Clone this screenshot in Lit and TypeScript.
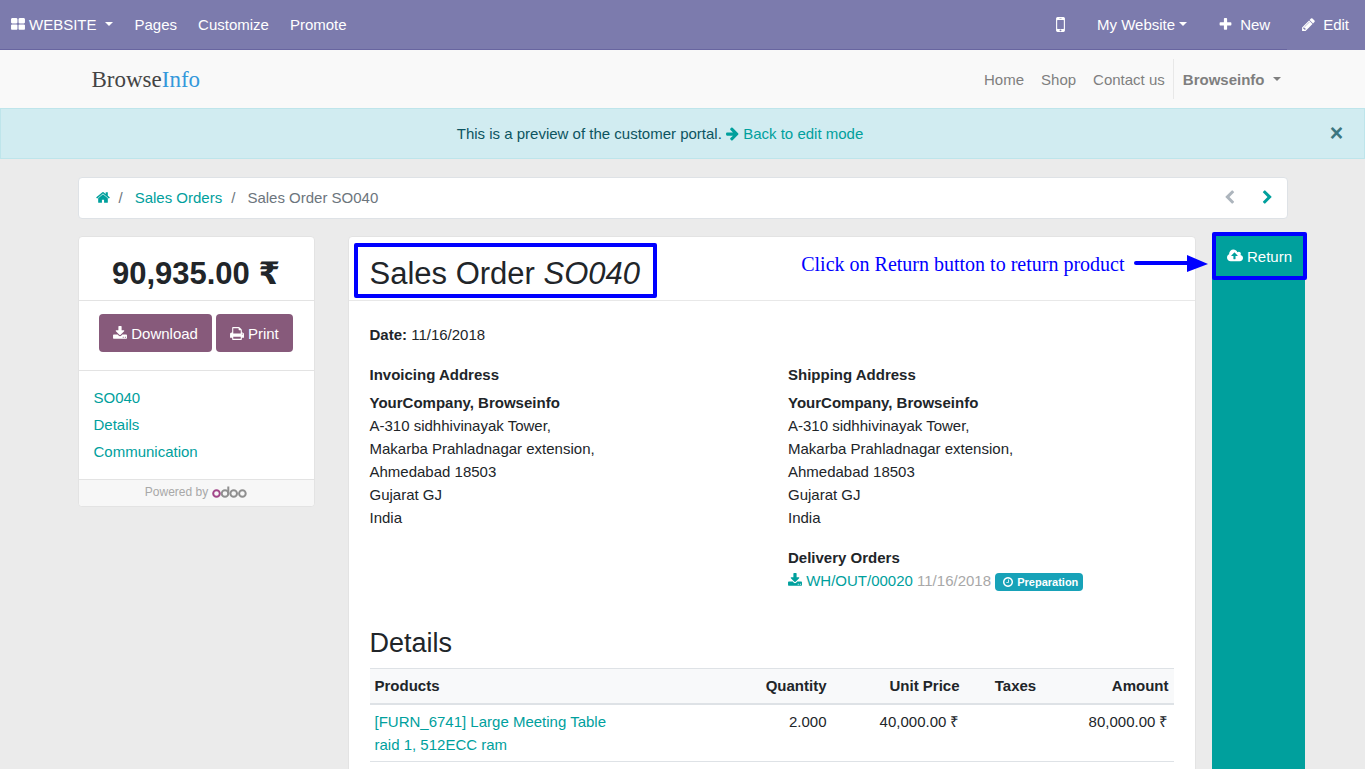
import { LitElement, html, css, svg } from "lit";
import { customElement, property } from "lit/decorators.js";

interface Glyph {
  box: string;
  d: string;
}

const GLYPHS: Record<string, Glyph> = {
  grid: {
    box: "64 0 1664 1792",
    d: "M832 1024v384q0 52-38 90t-90 38h-512q-52 0-90-38t-38-90v-384q0-52 38-90t90-38h512q52 0 90 38t38 90zm0-768v384q0 52-38 90t-90 38h-512q-52 0-90-38t-38-90v-384q0-52 38-90t90-38h512q52 0 90 38t38 90zm896 768v384q0 52-38 90t-90 38h-512q-52 0-90-38t-38-90v-384q0-52 38-90t90-38h512q52 0 90 38t38 90zm0-768v384q0 52-38 90t-90 38h-512q-52 0-90-38t-38-90v-384q0-52 38-90t90-38h512q52 0 90 38t38 90z",
  },
  home: {
    box: "64 0 1664 1792",
    d: "M1472 992v480q0 26-19 45t-45 19h-384v-384h-256v384h-384q-26 0-45-19t-19-45v-480q0-1 .5-3t.5-3l575-474 575 474q1 2 1 6zm223-69l-62 74q-8 9-21 11h-3q-13 0-21-7l-692-577-692 577q-12 8-24 7-13-2-21-11l-62-74q-8-10-7-23.5t11-21.5l719-599q32-26 76-26t76 26l244 204v-195q0-14 9-23t23-9h192q14 0 23 9t9 23v408l219 182q10 8 11 21.5t-7 23.5z",
  },
  download: {
    box: "64 0 1664 1792",
    d: "M1344 1344q0-26-19-45t-45-19-45 19-19 45 19 45 45 19 45-19 19-45zm256 0q0-26-19-45t-45-19-45 19-19 45 19 45 45 19 45-19 19-45zm128-224v320q0 40-28 68t-68 28h-1472q-40 0-68-28t-28-68v-320q0-40 28-68t68-28h465l135 136q58 56 136 56t136-56l136-136h464q40 0 68 28t28 68zm-325-569q17 41-14 70l-448 448q-18 19-45 19t-45-19l-448-448q-31-29-14-70 17-39 59-39h256v-448q0-26 19-45t45-19h256q26 0 45 19t19 45v448h256q42 0 59 39z",
  },
  print: {
    box: "64 0 1664 1792",
    d: "M448 1536h896v-256h-896v256zm0-640h896v-384h-160q-40 0-68-28t-28-68v-160h-640v640zm1152 64q0-26-19-45t-45-19-45 19-19 45 19 45 45 19 45-19 19-45zm128 0v416q0 13-9.500 22.500t-22.500 9.500h-224v160q0 40-28 68t-68 28h-960q-40 0-68-28t-28-68v-160h-224q-13 0-22.500-9.500t-9.500-22.500v-416q0-79 56.500-135.500t135.500-56.500h64v-544q0-40 28-68t68-28h672q40 0 88 20t76 48l152 152q28 28 48 76t20 88v256h64q79 0 135.500 56.500t56.500 135.500z",
  },
  plus: {
    box: "128 0 1536 1792",
    d: "M1600 736v192q0 40-28 68t-68 28h-416v416q0 40-28 68t-68 28h-192q-40 0-68-28t-28-68v-416h-416q-40 0-68-28t-28-68v-192q0-40 28-68t68-28h416v-416q0-40 28-68t68-28h192q40 0 68 28t28 68v416h416q40 0 68 28t28 68z",
  },
  pencil: {
    box: "128 0 1536 1792",
    d: "M491 1536l91-91-235-235-91 91v107h128v128h107zm523-928q0-22-22-22-10 0-17 7l-542 542q-7 7-7 17 0 22 22 22 10 0 17-7l542-542q7-7 7-17zm-54-192l416 416-832 832h-416v-416zm683 96q0 53-37 90l-166 166-416-416 166-165q36-38 90-38 53 0 91 38l235 234q37 39 37 91z",
  },
  arrow: {
    box: "128 0 1536 1792",
    d: "M1600 960q0 54-37 91l-651 651q-39 37-91 37-51 0-90-37l-75-75q-38-38-38-91t38-91l293-293h-704q-52 0-84.500-37.500t-32.500-90.500v-128q0-53 32.500-90.500t84.500-37.500h704l-293-294q-38-36-38-90t38-90l75-75q38-38 90-38 53 0 91 38l651 651q37 35 37 90z",
  },
  left: {
    box: "256 0 1280 1792",
    d: "M1427 301l-531 531 531 531q19 19 19 45t-19 45l-166 166q-19 19-45 19t-45-19l-742-742q-19-19-19-45t19-45l742-742q19-19 45-19t45 19l166 166q19 19 19 45t-19 45z",
  },
  right: {
    box: "256 0 1280 1792",
    d: "M1363 877l-742 742q-19 19-45 19t-45-19l-166-166q-19-19-19-45t19-45l531-531-531-531q-19-19-19-45t19-45l166-166q19-19 45-19t45 19l742 742q19 19 19 45t-19 45z",
  },
  cloud: {
    box: "0 64 1920 1792",
    d: "M1280 864q0-14-9-23l-352-352q-9-9-23-9t-23 9l-351 351q-10 12-10 24 0 14 9 23t23 9h224v352q0 13 9.500 22.500t22.500 9.500h192q13 0 22.500-9.500t9.500-22.500v-352h224q13 0 22.500-9.500t9.500-22.500zm640 288q0 159-112.500 271.500t-271.500 112.500h-1088q-185 0-316.500-131.500t-131.500-316.500q0-130 70-240t188-165q-2-30-2-43 0-212 150-362t362-150q156 0 285.500 87t188.500 231q71-62 166-62 106 0 181 75t75 181q0 76-41 138 130 31 213.500 135.500t83.500 238.500z",
  },
  mobile: {
    box: "448 160 896 1472",
    d: "M976 1408q0-33-23.500-56.500t-56.500-23.500-56.500 23.500-23.500 56.500 23.500 56.500 56.500 23.500 56.500-23.500 23.500-56.500zm208-160v-704q0-13-9.500-22.500t-22.500-9.500h-512q-13 0-22.500 9.500t-9.500 22.500v704q0 13 9.500 22.500t22.500 9.500h512q13 0 22.500-9.500t9.500-22.500zm-192-848q0-16-16-16h-160q-16 0-16 16t16 16h160q16 0 16-16zm288-16v1024q0 52-38 90t-90 38h-512q-52 0-90-38t-38-90v-1024q0-52 38-90t90-38h512q52 0 90 38t38 90z",
  },
  clock: {
    box: "128 0 1536 1792",
    d: "M1024 544v448q0 14-9 23t-23 9h-320q-14 0-23-9t-9-23v-64q0-14 9-23t23-9h224v-352q0-14 9-23t23-9h64q14 0 23 9t9 23zm416 352q0-148-73-273t-198-198-273-73-273 73-198 198-73 273 73 273 198 198 273 73 273-73 198-198 73-273zm224 0q0 209-103 385.500t-279.500 279.500-385.500 103-385.500-103-279.500-279.500-103-385.500 103-385.500 279.500-279.500 385.500-103 385.500 103 279.500 279.500 103 385.500z",
  },
};

@customElement("fa-icon")
class FaIcon extends LitElement {
  @property() name = "home";

  static styles = css`
    :host {
      display: inline-block;
      width: 14px;
      height: 15px;
      flex: none;
    }
    svg {
      display: block;
      width: 100%;
      height: 100%;
      fill: currentColor;
    }
  `;

  render() {
    const glyph = GLYPHS[this.name];
    return html`<svg viewBox=${glyph.box} aria-hidden="true">${svg`<path d=${glyph.d}></path>`}</svg>`;
  }
}

const ADDRESS = [
  "A-310 sidhhivinayak Tower,",
  "Makarba Prahladnagar extension,",
  "Ahmedabad 18503",
  "Gujarat GJ",
  "India",
];

@customElement("app-root")
class AppRoot extends LitElement {
  static styles = css`
    :host {
      display: flex;
      flex-direction: column;
      height: 100vh;
      overflow: hidden;
      background: #ebebeb;
      color: #212529;
      font-family: "Liberation Sans", Arial, sans-serif;
      font-size: 15px;
      line-height: 23px;
    }
    * {
      box-sizing: border-box;
    }
    a {
      color: #00a09d;
      text-decoration: none;
    }
    button {
      font: inherit;
      border: 0;
      cursor: pointer;
    }
    h1,
    h2,
    h3,
    p,
    ul,
    ol {
      margin: 0;
      padding: 0;
      list-style: none;
    }
    .caret {
      display: inline-block;
      border: 4px solid transparent;
      border-top-color: currentColor;
      border-bottom: 0;
    }

    /* editor bar */
    .bar {
      flex: none;
      display: flex;
      height: 50px;
      background: #7c7bad;
      box-shadow: inset 0 -1px #6865a0;
    }
    .bar button {
      display: flex;
      align-items: center;
      padding: 0 10px 2px 11px;
      background: none;
      color: #fff;
    }
    .bar .apps {
      gap: 4px;
      padding-right: 11px;
    }
    .bar .apps .caret {
      margin-left: 4px;
    }
    .bar .phone {
      margin-left: auto;
      padding: 0 20px 2px;
    }
    .phone fa-icon {
      width: 11px;
      height: 17px;
    }
    .bar .site {
      gap: 4px;
      padding-right: 12px;
    }
    .bar .new {
      gap: 8px;
      padding: 0 17px 2px 20px;
    }
    .bar .edit {
      gap: 8px;
      padding: 0 16px 2px 15px;
      background: #7c7bad;
    }
    .new fa-icon,
    .edit fa-icon {
      width: 13px;
    }

    /* site header */
    .head {
      flex: none;
      height: 58px;
      background: #f9f9f9;
    }
    .wrap {
      width: 100%;
      max-width: 1210px;
      margin: 0 auto;
    }
    .head .wrap {
      display: flex;
      align-items: center;
      height: 100%;
      padding: 0 7px 0 14px;
    }
    .logo {
      margin-right: auto;
      color: #444;
      font-family: "Liberation Serif", serif;
      font-size: 23px;
    }
    .logo span {
      color: #3498db;
    }
    .menu {
      display: flex;
      align-items: center;
    }
    .menu a {
      padding: 0 8px 0 9px;
      color: #7f7f7f;
    }
    .user {
      display: flex;
      align-items: center;
      gap: 8px;
      height: 40px;
      padding: 0 0 0 9px;
      border-left: 1px solid #e8e8e8;
      background: none;
      color: #7f7f7f;
    }

    /* preview notice */
    .notice {
      flex: none;
      display: flex;
      align-items: center;
      height: 51px;
      padding: 0 20px 0 20px;
      border: 1px solid #bee5eb;
      background: #d1ecf1;
      color: #0c5460;
    }
    .notice p {
      flex: 1;
      text-align: center;
    }
    .notice fa-icon {
      width: 13px;
      vertical-align: -2px;
    }
    .close {
      width: 15px;
      margin-left: 30px;
      padding: 0;
      background: none;
      color: #3c7680;
      font-size: 23px;
      font-weight: bold;
      text-align: center;
    }

    /* breadcrumb */
    .crumbs {
      flex: none;
      display: flex;
      align-items: center;
      height: 42px;
      margin-top: 18px;
      padding: 0 14px 2px 17px;
      border: 1px solid #dee2e6;
      border-radius: 4px;
      background: #fff;
      color: #6c757d;
    }
    .crumbs ol {
      display: flex;
      align-items: center;
      flex: 1;
    }
    .crumbs li + li::before {
      content: "/";
      padding: 0 12px 0 9px;
    }
    .crumbs fa-icon {
      display: block;
    }
    .pager {
      display: flex;
      gap: 27px;
      color: #adb5bd;
    }
    .pager a,
    .pager span {
      display: flex;
    }
    .pager fa-icon {
      width: 11px;
    }

    /* three columns; the action column reaches past the container */
    .cols {
      display: flex;
      align-items: flex-start;
      flex: 1;
      width: calc(100% + 17px);
      margin-top: 17px;
    }
    .page {
      display: flex;
      flex-direction: column;
      flex: 1;
      min-height: 0;
    }
    .card {
      border: 1px solid #e3e3e3;
      border-radius: 4px;
      background: #fff;
    }
    .side {
      flex: 0 0 237px;
      margin-right: 33px;
    }
    .total {
      padding: 17px 0 7px;
      border-bottom: 1px solid #e3e3e3;
      font-size: 31px;
      line-height: 39px;
      font-weight: bold;
      text-align: center;
    }
    .total span {
      font-family: "DejaVu Sans", sans-serif;
      line-height: 1;
    }
    .actions {
      display: flex;
      justify-content: center;
      gap: 4px;
      padding: 13px 0 18px;
      border-bottom: 1px solid #e3e3e3;
    }
    .actions button {
      display: flex;
      align-items: center;
      gap: 4px;
      height: 38px;
      padding: 0 14px;
      border-radius: 4px;
      background: #875a7b;
      color: #fff;
    }
    .toc {
      padding: 13px 15px 14px;
      line-height: 27px;
    }
    .toc a {
      display: block;
    }
    .powered {
      display: flex;
      align-items: center;
      justify-content: center;
      gap: 4px;
      height: 27px;
      padding-bottom: 2px;
      border-top: 1px solid #e3e3e3;
      border-radius: 0 0 4px 4px;
      background: #f7f7f7;
      color: #a8a8a8;
      font-size: 12px;
    }
    .powered svg {
      width: 35px;
      height: 14px;
    }

    .order {
      position: relative;
      flex: 1;
      min-width: 0;
      min-height: 600px;
    }
    .order h1 {
      padding: 17px 21px 7px;
      border-bottom: 1px solid #e8e8e8;
      font-size: 31px;
      line-height: 39px;
      font-weight: normal;
    }
    .body {
      padding: 22px 21px;
    }
    .addresses {
      display: grid;
      grid-template-columns: 1fr 1fr;
      gap: 33px;
      margin-top: 17px;
    }
    .addresses h3 {
      font-size: 15px;
    }
    .addresses address {
      margin: 5px 0 17px;
      font-style: normal;
    }
    .ship fa-icon {
      vertical-align: -2px;
    }
    .muted {
      color: #a8a8a8;
    }
    .badge {
      display: inline-flex;
      align-items: center;
      gap: 4px;
      height: 18px;
      padding: 0 5px 0 8px;
      border-radius: 4px;
      background: #17a2b8;
      color: #fff;
      font-size: 11px;
      line-height: 18px;
      font-weight: bold;
      vertical-align: -2px;
    }
    .badge fa-icon {
      width: 10px;
      height: 12px;
    }
    .body h2 {
      margin: 34px 0 8px;
      font-size: 27px;
      line-height: 34px;
      font-weight: normal;
    }
    table {
      width: 100%;
      table-layout: fixed;
      border-spacing: 0;
    }
    th {
      padding: 6px 5px;
      border-top: 1px solid #dee2e6;
      border-bottom: 2px solid #dee2e6;
      background: #f8f9fa;
      line-height: 22px;
      text-align: left;
    }
    td {
      padding: 5px;
      border-bottom: 1px solid #dee2e6;
      vertical-align: top;
    }
    td a {
      display: block;
      white-space: pre-line;
    }
    .num {
      text-align: right;
    }
    .mid {
      text-align: center;
    }
    .c-qty {
      width: 120px;
    }
    .c-price {
      width: 133px;
    }
    .c-tax {
      width: 102px;
    }
    .c-amount {
      width: 107px;
    }

    .rail {
      position: relative;
      align-self: stretch;
      flex: 0 0 93px;
      margin-left: 16px;
      background: #00a09d;
    }
    .rail button {
      display: flex;
      align-items: center;
      justify-content: center;
      gap: 4px;
      width: 100%;
      height: 40px;
      padding: 0 0 0 3px;
      background: none;
      color: #fff;
    }
    .rail fa-icon {
      width: 16px;
    }

    /* tutorial marks drawn over the page */
    .mark {
      position: absolute;
      border: 4px solid #00f;
      border-radius: 2px;
      pointer-events: none;
    }
    .mark-title {
      left: 5px;
      top: 6px;
      width: 303px;
      height: 55px;
    }
    .mark-return {
      left: 0;
      top: -4px;
      width: 95px;
      height: 48px;
    }
    .tip {
      position: absolute;
      right: -13px;
      top: 14px;
      display: flex;
      align-items: center;
      gap: 8px;
      color: #00f;
      font-family: "Liberation Serif", serif;
      font-size: 20px;
      line-height: 26px;
    }
    .tip svg {
      width: 75px;
      height: 18px;
    }
  `;

  private address(title: string) {
    return html`<h3>${title}</h3>
      <address>
        <b>YourCompany, Browseinfo</b>
        ${ADDRESS.map((line) => html`<div>${line}</div>`)}
      </address>`;
  }

  render() {
    return html`
      <nav class="bar">
        <button class="apps"><fa-icon name="grid"></fa-icon>WEBSITE <span class="caret"></span></button>
        <button>Pages</button>
        <button>Customize</button>
        <button>Promote</button>
        <button class="phone" aria-label="Mobile preview"><fa-icon name="mobile"></fa-icon></button>
        <button class="site">My Website<span class="caret"></span></button>
        <button class="new"><fa-icon name="plus"></fa-icon>New</button>
        <button class="edit"><fa-icon name="pencil"></fa-icon>Edit</button>
      </nav>

      <header class="head">
        <div class="wrap">
          <a class="logo" href="#">Browse<span>Info</span></a>
          <nav class="menu">
            <a href="#">Home</a>
            <a href="#">Shop</a>
            <a href="#">Contact us</a>
            <button class="user"><b>Browseinfo</b><span class="caret"></span></button>
          </nav>
        </div>
      </header>

      <div class="notice" role="alert">
        <p>
          This is a preview of the customer portal.
          <a href="#"><fa-icon name="arrow"></fa-icon> Back to edit mode</a>
        </p>
        <button class="close" aria-label="Close">×</button>
      </div>

      <main class="wrap page">
        <div class="crumbs">
          <ol>
            <li><a href="#" aria-label="Home"><fa-icon name="home"></fa-icon></a></li>
            <li><a href="#">Sales Orders</a></li>
            <li>Sales Order SO040</li>
          </ol>
          <div class="pager">
            <span><fa-icon name="left"></fa-icon></span>
            <a href="#" aria-label="Next"><fa-icon name="right"></fa-icon></a>
          </div>
        </div>

        <div class="cols">
          <aside class="card side">
            <h2 class="total">90,935.00 <span>₹</span></h2>
            <div class="actions">
              <button><fa-icon name="download"></fa-icon>Download</button>
              <button><fa-icon name="print"></fa-icon>Print</button>
            </div>
            <nav class="toc">
              <a href="#">SO040</a>
              <a href="#">Details</a>
              <a href="#">Communication</a>
            </nav>
            <div class="powered">
              Powered by
              <svg viewBox="0 0 35 14" fill="none" stroke="#8f8f8f" stroke-width="2" role="img" aria-label="odoo">
                <circle cx="4.500" cy="8.500" r="3.300" stroke="#a24689"></circle>
                <circle cx="13" cy="8.500" r="3.300"></circle>
                <path d="M16.300 8.500V1.500"></path>
                <circle cx="21.700" cy="8.500" r="3.300"></circle>
                <circle cx="30.400" cy="8.500" r="3.300"></circle>
              </svg>
            </div>
          </aside>

          <section class="card order">
            <h1>Sales Order <em>SO040</em></h1>
            <div class="body">
              <p><b>Date:</b> 11/16/2018</p>
              <div class="addresses">
                <div>${this.address("Invoicing Address")}</div>
                <div class="ship">
                  ${this.address("Shipping Address")}
                  <h3>Delivery Orders</h3>
                  <a href="#"><fa-icon name="download"></fa-icon> WH/OUT/00020</a>
                  <span class="muted">11/16/2018</span>
                  <span class="badge"><fa-icon name="clock"></fa-icon>Preparation</span>
                </div>
              </div>
              <h2>Details</h2>
              <table>
                <thead>
                  <tr>
                    <th>Products</th>
                    <th class="num c-qty">Quantity</th>
                    <th class="num c-price">Unit Price</th>
                    <th class="mid c-tax">Taxes</th>
                    <th class="num c-amount">Amount</th>
                  </tr>
                </thead>
                <tbody>
                  <tr>
                    <td><a href="#">${"[FURN_6741] Large Meeting Table\nraid 1, 512ECC ram"}</a></td>
                    <td class="num">2.000</td>
                    <td class="num">40,000.00 ₹</td>
                    <td class="mid"></td>
                    <td class="num">80,000.00 ₹</td>
                  </tr>
                </tbody>
              </table>
            </div>
            <div class="mark mark-title"></div>
            <div class="tip">
              Click on Return button to return product
              <svg viewBox="0 0 75 18" aria-hidden="true">
                <path d="M3 8H56" stroke="#00f" stroke-width="4" stroke-linecap="round"></path>
                <path d="M54 0L75 9L54 17Z" fill="#00f"></path>
              </svg>
            </div>
          </section>

          <div class="rail">
            <button><fa-icon name="cloud"></fa-icon>Return</button>
            <div class="mark mark-return"></div>
          </div>
        </div>
      </main>
    `;
  }
}
